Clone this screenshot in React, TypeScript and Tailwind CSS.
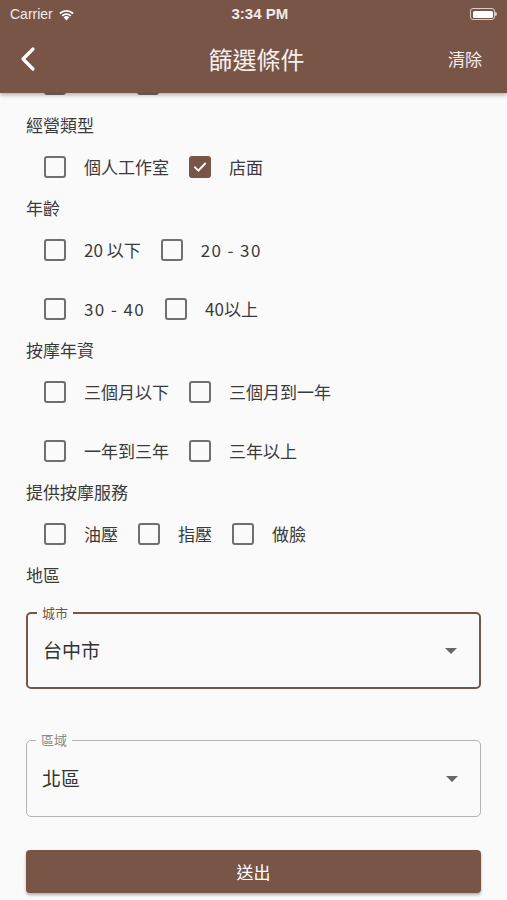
import { ReactNode } from "react";

const font = { fontFamily: '"Noto Sans CJK TC", "Noto Sans", sans-serif' };

const Box = ({ checked = false }: { checked?: boolean }) =>
  checked ? (
    <div className="w-[22px] h-[22px] rounded-[3px] bg-[#795548] flex items-center justify-center shrink-0">
      <svg width="16" height="16" viewBox="0 0 24 24" fill="none">
        <path d="M4.5 12.5l5 5L19.5 7" stroke="white" strokeWidth="2.8" strokeLinecap="square" />
      </svg>
    </div>
  ) : (
    <div className="w-[22px] h-[22px] rounded-[3px] border-[2.5px] border-[#6f6f6f] shrink-0" />
  );

const Item = ({ label, checked, wide }: { label: string; checked?: boolean; wide?: boolean }) => (
  <div className="flex items-center">
    <Box checked={checked} />
    <span
      className={`ml-[18px] text-[17px] text-[#3a3a3a] leading-none ${wide ? "tracking-[1.4px]" : ""}`}
    >
      {label}
    </span>
  </div>
);

const Row = ({ children }: { children: ReactNode }) => (
  <div className="h-[59px] flex items-center pl-[44px] gap-[20px]">{children}</div>
);

const Label = ({ children }: { children: ReactNode }) => (
  <div className="h-[24px] flex items-center pl-[26px] text-[17px] text-[#3a3a3a]">{children}</div>
);

const Select = ({ label, value, active }: { label: string; value: string; active?: boolean }) => (
  <div
    className={`relative h-[77px] rounded-[5px] flex items-center justify-between pl-[15px] pr-[22px] ${
      active ? "border-2 border-[#795548]" : "border border-[#b3b3b3]"
    }`}
  >
    <span
      className={`absolute -top-[10px] left-[9px] px-[5px] bg-[#fafafa] text-[13px] leading-[18px] ${
        active ? "text-[#795548]" : "text-[#8a8a8a]"
      }`}
    >
      {label}
    </span>
    <span className="text-[19px] text-[#333]">{value}</span>
    <svg width="12" height="6" viewBox="0 0 12 6">
      <path d="M0 0h12L6 6z" fill="#666" />
    </svg>
  </div>
);

export default function App() {
  return (
    <div className="w-[507px] h-[900px] bg-[#fafafa] overflow-hidden flex flex-col" style={font}>
      <header className="relative z-10 h-[93px] bg-[#795548] text-white shadow-[0_2px_4px_rgba(0,0,0,0.3)] shrink-0">
        <div className="h-[28px] flex items-center justify-between px-[10px]" style={{ fontFamily: '"Liberation Sans", sans-serif' }}>
          <div className="flex items-center gap-[5px] text-[14px] text-[#f1ebe8]">
            <span>Carrier</span>
            <svg width="17" height="13" viewBox="0 0 17 13">
              <path d="M8.5 12.5L5.6 9.3a4.2 4.2 0 0 1 5.8 0z" fill="white" />
              <path d="M3.6 7.2a7 7 0 0 1 9.8 0l-1.3 1.4a5.1 5.1 0 0 0-7.2 0z" fill="white" />
              <path d="M1.3 4.8a10.4 10.4 0 0 1 14.4 0l-1.3 1.4a8.5 8.5 0 0 0-11.8 0z" fill="white" />
            </svg>
          </div>
          <span className="text-[15px] font-semibold text-[#f1ebe8] ml-[38px]">3:34 PM</span>
          <div className="flex items-center w-[90px] justify-end">
            <div className="w-[25px] h-[12px] rounded-[3px] border border-[#d8cdc8] p-[1.5px]">
              <div className="w-full h-full rounded-[1.5px] bg-white" />
            </div>
            <div className="w-[1.5px] h-[4px] bg-[#d8cdc8] rounded-r" />
          </div>
        </div>
        <div className="h-[62px] flex items-center justify-between pl-[19px] pr-[25px]">
          <svg width="18" height="26" viewBox="0 0 18 26">
            <path d="M14 3L4 13l10 10" stroke="white" strokeWidth="3.2" fill="none" strokeLinecap="round" strokeLinejoin="round" />
          </svg>
          <span className="text-[24px] text-[#f4efec] ml-[28px]">篩選條件</span>
          <span className="text-[17px] text-[#f1ebe8]">清除</span>
        </div>
      </header>

      <div className="h-[20px] overflow-hidden shrink-0">
        <div className="-mt-[39px]">
          <Row>
            <div className="w-[22px] h-[22px] rounded-[3px] border-[2.5px] border-[#6f6f6f]" />
            <div className="w-[22px] h-[22px] rounded-[3px] border-[2.5px] border-[#6f6f6f] ml-[51px]" />
          </Row>
        </div>
      </div>

      <Label>經營類型</Label>
      <Row>
        <Item label="個人工作室" />
        <Item label="店面" checked />
      </Row>
      <Label>年齡</Label>
      <Row>
        <Item label="20 以下" />
        <Item label="20 - 30" wide />
      </Row>
      <Row>
        <Item label="30 - 40" wide />
        <Item label="40以上" />
      </Row>
      <Label>按摩年資</Label>
      <Row>
        <Item label="三個月以下" />
        <Item label="三個月到一年" />
      </Row>
      <Row>
        <Item label="一年到三年" />
        <Item label="三年以上" />
      </Row>
      <Label>提供按摩服務</Label>
      <Row>
        <Item label="油壓" />
        <Item label="指壓" />
        <Item label="做臉" />
      </Row>
      <Label>地區</Label>

      <div className="px-[26px] pt-[25px] flex flex-col">
        <Select label="城市" value="台中市" active />
        <div className="h-[51px]" />
        <Select label="區域" value="北區" />
        <button className="mt-[33px] h-[43px] rounded-[4px] bg-[#795548] text-white text-[17px] shadow-[0_2px_3px_rgba(0,0,0,0.3)]">
          送出
        </button>
      </div>
    </div>
  );
}
